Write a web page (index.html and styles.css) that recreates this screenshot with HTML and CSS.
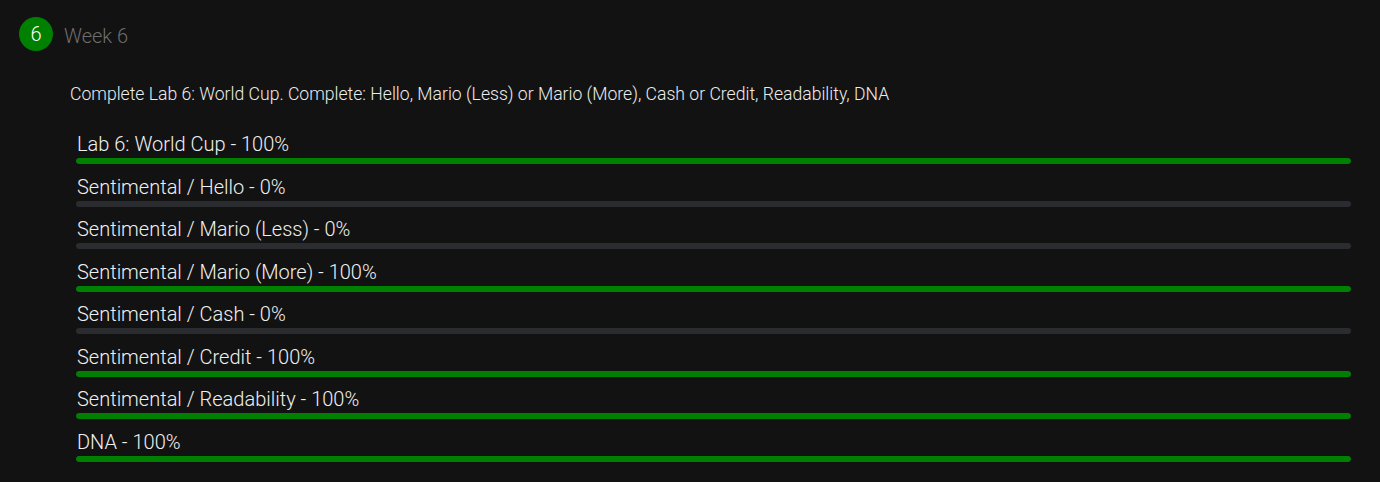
FILE: index.html
```html
<!DOCTYPE html>
<html>
<head>
<meta charset="utf-8">
<link rel="stylesheet" href="styles.css">
</head>
<body>
<div class="week">
  <div class="week-head">
    <div class="badge">6</div>
    <div class="week-title">Week 6</div>
  </div>
  <div class="week-body">
    <p class="desc">Complete Lab 6: World Cup. Complete: Hello, Mario (Less) or Mario (More), Cash or Credit, Readability, DNA</p>
    <div class="items">
      <div class="item"><div class="label">Lab 6: World Cup - 100%</div><div class="bar"><div class="fill" style="width:100%"></div></div></div>
      <div class="item"><div class="label">Sentimental / Hello - 0%</div><div class="bar"><div class="fill" style="width:0%"></div></div></div>
      <div class="item"><div class="label">Sentimental / Mario (Less) - 0%</div><div class="bar"><div class="fill" style="width:0%"></div></div></div>
      <div class="item"><div class="label">Sentimental / Mario (More) - 100%</div><div class="bar"><div class="fill" style="width:100%"></div></div></div>
      <div class="item"><div class="label">Sentimental / Cash - 0%</div><div class="bar"><div class="fill" style="width:0%"></div></div></div>
      <div class="item"><div class="label">Sentimental / Credit - 100%</div><div class="bar"><div class="fill" style="width:100%"></div></div></div>
      <div class="item"><div class="label">Sentimental / Readability - 100%</div><div class="bar"><div class="fill" style="width:100%"></div></div></div>
      <div class="item"><div class="label">DNA - 100%</div><div class="bar"><div class="fill" style="width:100%"></div></div></div>
    </div>
  </div>
</div>
</body>
</html>
```
FILE: styles.css
```css
html, body {
  margin: 0;
  padding: 0;
  background: #121212;
  font-family: Roboto, "Liberation Sans", sans-serif;
}
.week {
  padding: 17px 29px 0 19px;
}
.week-head {
  display: flex;
  align-items: center;
  gap: 10px;
  height: 34px;
}
.badge {
  width: 34px;
  height: 34px;
  border-radius: 50%;
  background: #008000;
  color: #ffffff;
  font-size: 20px;
  display: flex;
  align-items: center;
  justify-content: center;
  font-weight: 300;
}
.week-title {
  color: #6e6e6e;
  font-size: 20px;
  font-weight: 300;
  margin-top: 4px;
  padding-left: 1px;
}
.week-body {
  padding-left: 51px;
}
.desc {
  margin: 32px 0 0 0;
  color: #ececec;
  font-size: 17.6px;
  line-height: 22px;
  font-weight: 300;
}
.items {
  padding-left: 6px;
  margin-top: 27px;
}
.item {
  margin-bottom: 10.5px;
}
.label {
  color: #f0f0f0;
  font-size: 20px;
  line-height: 24px;
  font-weight: 300;
  padding-left: 1px;
}
.bar {
  margin-top: 2px;
  height: 6px;
  border-radius: 3px;
  background: #2a2c30;
  overflow: hidden;
}
.fill {
  height: 100%;
  background: #008000;
  border-radius: 3px;
}
```
